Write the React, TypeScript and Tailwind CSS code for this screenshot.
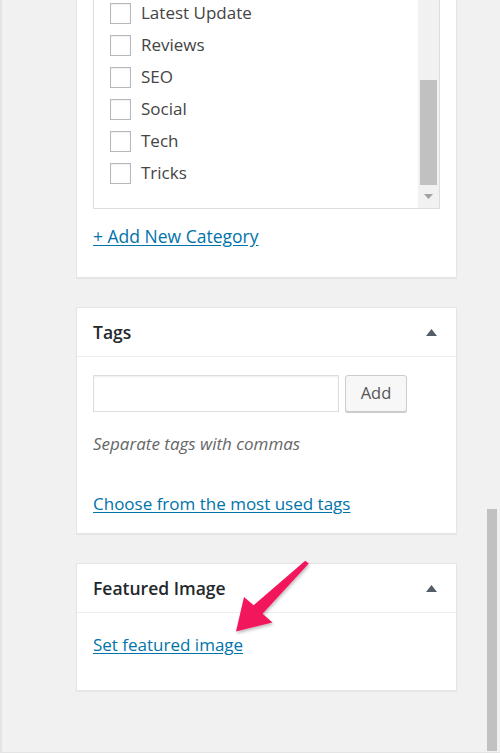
import React from 'react';

const categories = ['Latest Update', 'Reviews', 'SEO', 'Social', 'Tech', 'Tricks'];

function Caret() {
  return (
    <svg width="11" height="7" viewBox="0 0 11 7" className="shrink-0">
      <path d="M5.5 0 L11 7 L0 7 Z" fill="#555d66" />
    </svg>
  );
}

function Card({ title, children, className = '' }: { title?: string; children: React.ReactNode; className?: string }) {
  return (
    <section className={`w-[381px] bg-white border border-[#e5e5e5] shadow-[0_1px_1px_rgba(0,0,0,0.04)] ${className}`}>
      {title && (
        <div className="h-[49px] px-4 flex items-center justify-between border-b border-[#eeeeee]">
          <h2 className="text-[17.5px] font-semibold text-[#23282d]">{title}</h2>
          <div className="pr-[3px]">
            <Caret />
          </div>
        </div>
      )}
      {children}
    </section>
  );
}

export default function App() {
  return (
    <div
      className="relative h-[753px] w-[500px] overflow-hidden bg-[#f1f1f1] border-l-2 border-b border-[#e4e4e4] flex"
      style={{ fontFamily: '"Open Sans", "Noto Sans", sans-serif' }}
    >
      <main className="flex-1 pl-[74px]">
        {/* Categories (scrolled) */}
        <Card className="-mt-[40px] px-4 pt-[9px] pb-[29px]">
          <div className="flex h-[239px] border border-[#dddddd]">
            <ul className="flex-1 pt-[26px] pl-4">
              {categories.map((c) => (
                <li key={c} className="h-[32px] flex items-center gap-[10px]">
                  <span className="w-[21px] h-[21px] border border-[#b4b9be] bg-white shadow-[inset_0_1px_2px_rgba(0,0,0,0.07)]" />
                  <span className="text-[17px] leading-6 text-[#444]">{c}</span>
                </li>
              ))}
            </ul>
            <div className="w-[21px] bg-[#f1f1f1] flex flex-col justify-end items-center">
              <div className="w-[17px] h-[105px] bg-[#c1c1c1]" />
              <div className="h-[23px] flex items-center justify-center">
                <svg width="9" height="5" viewBox="0 0 9 5">
                  <path d="M0 0 L9 0 L4.5 5 Z" fill="#a3a3a3" />
                </svg>
              </div>
            </div>
          </div>
          <a href="#" className="mt-[15px] block text-[17.5px] leading-6 text-[#0073aa] underline underline-offset-2">
            + Add New Category
          </a>
        </Card>

        {/* Tags */}
        <Card title="Tags" className="mt-[29px]">
          <div className="px-4 pt-[18px] pb-[17px]">
            <div className="flex gap-[6px]">
              <input className="w-[246px] h-[37px] border border-[#dddddd] bg-white shadow-[inset_0_1px_2px_rgba(0,0,0,0.07)] outline-none" />
              <button className="w-[62px] h-[37px] rounded-[3px] border border-[#cccccc] bg-[#f7f7f7] shadow-[0_1px_0_#cccccc] text-[16.5px] text-[#555]">
                Add
              </button>
            </div>
            <p className="mt-[20px] text-[17px] leading-6 italic text-[#666]">Separate tags with commas</p>
            <a href="#" className="mt-[36px] block text-[17px] leading-6 text-[#0073aa] underline underline-offset-2">
              Choose from the most used tags
            </a>
          </div>
        </Card>

        {/* Featured Image */}
        <Card title="Featured Image" className="mt-[29px]">
          <div className="px-4 pt-[20px] pb-[33px]">
            <a href="#" className="block text-[17px] leading-6 text-[#0073aa] underline underline-offset-2">
              Set featured image
            </a>
          </div>
        </Card>
      </main>

      {/* window scrollbar */}
      <div className="w-[17px] flex flex-col justify-end items-center pb-[1px]">
        <div className="w-[10px] h-[242px] bg-[#c1c1c1]" />
      </div>

      {/* annotation arrow */}
      <svg className="absolute left-0 top-0 pointer-events-none" width="500" height="753" viewBox="0 0 500 753">
        <defs>
          <filter id="sh" x="-20%" y="-20%" width="140%" height="140%">
            <feDropShadow dx="1" dy="2" stdDeviation="1.5" floodColor="#000" floodOpacity="0.25" />
          </filter>
        </defs>
        <polygon
          points="303.2,560.8 306.8,563.6 260.6,613.8 270.5,622.5 234,631.5 242,597 251.6,605.2"
          fill="#f2185c"
          filter="url(#sh)"
        />
      </svg>
    </div>
  );
}
